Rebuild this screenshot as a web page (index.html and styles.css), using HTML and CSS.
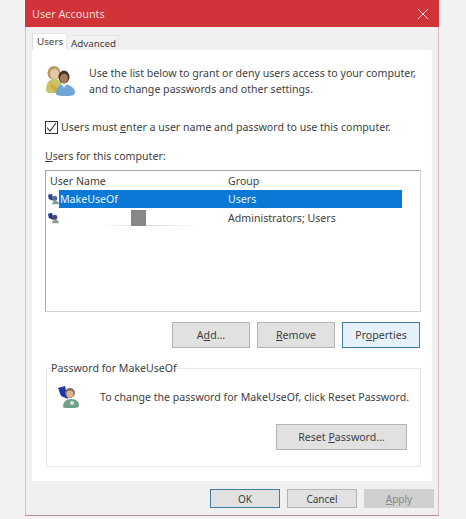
FILE: index.html
```html
<!DOCTYPE html>
<html lang="en">
<head>
<meta charset="utf-8">
<title>User Accounts</title>
<link rel="stylesheet" href="styles.css">
</head>
<body>
<div class="dialog">
  <header class="titlebar">
    <span class="title">User Accounts</span>
    <svg class="close" width="12" height="12" viewBox="0 0 12 12"><path d="M1 1l10 10M11 1L1 11" stroke="#f6d5d7" stroke-width="1" fill="none"/></svg>
  </header>
  <div class="tabs">
    <div class="tab tab-active">Users</div>
    <div class="tab">Advanced</div>
  </div>
  <main class="panel">
    <section class="intro">
      <svg class="intro-icon" width="32" height="32" viewBox="0 0 32 32">
        <ellipse cx="9" cy="8" rx="6.5" ry="7" fill="#b89a62"/>
        <ellipse cx="9.5" cy="9" rx="4.5" ry="5.2" fill="#e6c9a0"/>
        <path d="M1 26c0-8 3-12 8-12s8 3 8 8l-5 6H3z" fill="#c8c36c"/>
        <path d="M6 18l11 9-2 3-3-3-1 1-6-7z" fill="#d9a92f"/>
        <ellipse cx="19" cy="12" rx="5.5" ry="6.5" fill="#46362c"/>
        <ellipse cx="19" cy="13.5" rx="4" ry="4.8" fill="#a87c5e"/>
        <path d="M11 29c0-6 3-10 8-10s11 4 11 8c0 3-3 4-7 4s-12 0-12-2z" fill="#6fa6d6"/>
        <path d="M16 19l3 4 3-4z" fill="#dfeaf4"/>
      </svg>
      <p class="intro-text">Use the list below to grant or deny users access to your computer,<br>and to change passwords and other settings.</p>
    </section>
    <label class="check-row">
      <span class="checkbox"><svg width="11" height="11" viewBox="0 0 11 11"><path d="M1 5.5l3 3.5 6-8" stroke="#333" stroke-width="1.1" fill="none"/></svg></span>
      <span>Users must <u>e</u>nter a user name and password to use this computer.</span>
    </label>
    <div class="list-label"><u>U</u>sers for this computer:</div>
    <div class="listbox">
      <div class="list-head"><span class="col-name">User Name</span><span class="col-group">Group</span></div>
      <div class="list-row list-row-selected">
        <svg class="user-icon" width="13" height="13" viewBox="0 0 13 13"><path d="M0 1l5-1 1 8-5-2z" fill="#27408f"/><circle cx="8" cy="5" r="3" fill="#5a6a90"/><path d="M5 12c0-3 2-4 4-4s4 2 4 4z" fill="#7f9d9a"/></svg>
        <span class="cell-name">MakeUseOf</span><span class="cell-group">Users</span>
      </div>
      <div class="list-row">
        <svg class="user-icon" width="13" height="13" viewBox="0 0 13 13"><path d="M0 1l5-1 1 8-5-2z" fill="#27308f"/><circle cx="8" cy="5" r="3" fill="#4a4a70"/><path d="M5 12c0-3 2-4 4-4s4 2 4 4z" fill="#8f9f8a"/></svg>
        <span class="cell-name"><span class="smudge"></span><span class="redacted"></span></span><span class="cell-group">Administrators; Users</span>
      </div>
    </div>
    <div class="list-actions">
      <button class="btn btn-list" type="button">A<u>d</u>d...</button>
      <button class="btn btn-list" type="button"><u>R</u>emove</button>
      <button class="btn btn-list btn-hot" type="button">Pr<u>o</u>perties</button>
    </div>
    <fieldset class="group">
      <legend class="group-legend">Password for MakeUseOf</legend>
      <div class="group-info">
        <svg class="key-icon" width="22" height="22" viewBox="0 0 22 22">
          <path d="M0 2l7-2 3 13-7-3z" fill="#1d35a8"/>
          <circle cx="12" cy="7" r="5" fill="#8a6a50"/>
          <circle cx="12" cy="8" r="3.6" fill="#d8b498"/>
          <path d="M5 21c0-5 3-8 8-8s8 3 8 6-3 3-8 3-8 0-8-1z" fill="#6f9f84"/>
          <circle cx="14" cy="17" r="2" fill="#d6e8dc"/>
        </svg>
        <span>To change the password for MakeUseOf, click Reset Password.</span>
      </div>
      <div class="group-actions"><button class="btn btn-reset" type="button">Reset <u>P</u>assword...</button></div>
    </fieldset>
  </main>
  <footer class="footer">
    <button class="btn btn-foot btn-default" type="button">OK</button>
    <button class="btn btn-foot" type="button">Cancel</button>
    <button class="btn btn-foot btn-disabled" type="button"><u>A</u>pply</button>
  </footer>
</div>
</body>
</html>
```
FILE: styles.css
```css
* { box-sizing: border-box; }
html, body { margin: 0; height: 100%; }
body {
  background: #f2f2f2;
  width: 466px;
  height: 519px;
  overflow: hidden;
  font-family: "Noto Sans", "Open Sans", sans-serif;
  font-size: 10.6px;
  color: #404040;
  padding-left: 25px;
}
.dialog {
  width: 414px;
  height: 516px;
  background: #f0f0f0;
  border: 1px solid #dcbcbe;
  border-top: 0;
  border-bottom-color: #b5888c;
  display: flex;
  flex-direction: column;
}
.titlebar {
  height: 27px;
  margin: 0 -1px;
  background: #d13438;
  color: #f7d9da;
  display: flex;
  align-items: center;
  justify-content: space-between;
  padding: 0 10px 0 7px;
  font-size: 10.8px;
  flex: none;
}
.tabs {
  height: 23px;
  padding: 6px 0 0 6px;
  display: flex;
  align-items: flex-end;
  flex: none;
}
.tab {
  height: 15px;
  padding: 0 2px 0 4px;
  line-height: 15px;
  background: #f2f2f2;
  border: 1px solid #e6e6e6;
  border-bottom: 0;
  border-left: 0;
  font-size: 9.8px;
}
.tab-active {
  height: 17px;
  width: 35px;
  padding: 0 4px;
  line-height: 16px;
  background: #fff;
  border-left: 1px solid #dcdcdc;
}
.panel {
  flex: none;
  height: 431px;
  margin: 0 6px;
  background: #fff;
  padding: 15px 12px 0 13px;
  display: flex;
  flex-direction: column;
}
.intro { display: flex; align-items: flex-start; gap: 12px; height: 54px; flex: none; }
.intro-icon { flex: none; }
.intro-text { margin: 0; line-height: 16px; }
.check-row { display: flex; align-items: center; gap: 3px; height: 16px; flex: none; }
.checkbox {
  width: 13px;
  height: 13px;
  border: 1px solid #333;
  display: flex;
  align-items: center;
  justify-content: center;
  background: #fff;
  flex: none;
}
.list-label { margin-top: 13px; height: 16px; line-height: 16px; flex: none; }
.listbox {
  margin-top: 6px;
  width: 376px;
  height: 142px;
  border: 1px solid #a8a8a8;
  border-right-color: #cfcfcf;
  border-bottom-color: #cfcfcf;
  flex: none;
  padding-top: 2px;
}
.list-head { display: flex; height: 17px; line-height: 16px; padding-left: 4px; }
.col-name { width: 178px; }
.list-row { display: flex; align-items: center; height: 18px; padding-left: 2px; }
.list-row-selected { width: 356px; color: #e8f2fb; }
.list-row-selected .cell-name, .list-row-selected .cell-group { background: #0a78d4; height: 18px; line-height: 18px; }
.list-row + .list-row { margin-top: 1px; }
.user-icon { flex: none; width: 11px; height: 13px; }
.cell-name { width: 169px; padding-left: 1px; display: block; position: relative; }
.cell-group { flex: 1; line-height: 18px; }
.redacted {
  position: absolute;
  left: 72px;
  top: -8px;
  width: 15px;
  height: 16px;
  background: #888;
}
.smudge {
  position: absolute;
  left: 40px;
  top: 7px;
  width: 100px;
  height: 1px;
  background: linear-gradient(90deg, #fff, #d8d8d8 50%, #fff);
}
.list-actions { display: flex; gap: 7px; margin-top: 10px; padding-left: 127px; flex: none; }
.btn {
  font-family: inherit;
  font-size: 10.6px;
  color: #404040;
  background: #e1e1e1;
  border: 1px solid #b4b4b4;
  padding: 0;
  display: block;
}
.btn-list { width: 78px; height: 26px; }
.btn-hot { background: #e5f1fb; border-color: #3f7d9f; }
.group {
  margin: 13px 0 0 1px;
  padding: 0 0 0 4px;
  width: 375px;
  height: 106px;
  border: 1px solid #e6e6e6;
  flex: none;
}
.group-legend { padding: 0; line-height: 14px; }
.group-info { display: flex; align-items: center; gap: 20px; margin-top: 11px; padding-left: 7px; height: 22px; }
.key-icon { flex: none; }
.group-actions { display: flex; justify-content: flex-end; margin-top: 16px; padding-right: 13px; }
.btn-reset { width: 131px; height: 26px; }
.footer {
  flex: 1;
  display: flex;
  gap: 7px;
  justify-content: flex-end;
  padding: 8px 4px 0 0;
}
.btn-foot { width: 70px; height: 19px; font-size: 10px; }
.btn-default { border: 1px solid #3f7d9f; }
.btn-disabled { background: #cfcfcf; border-color: #cfcfcf; color: #8a8a8a; }
```
